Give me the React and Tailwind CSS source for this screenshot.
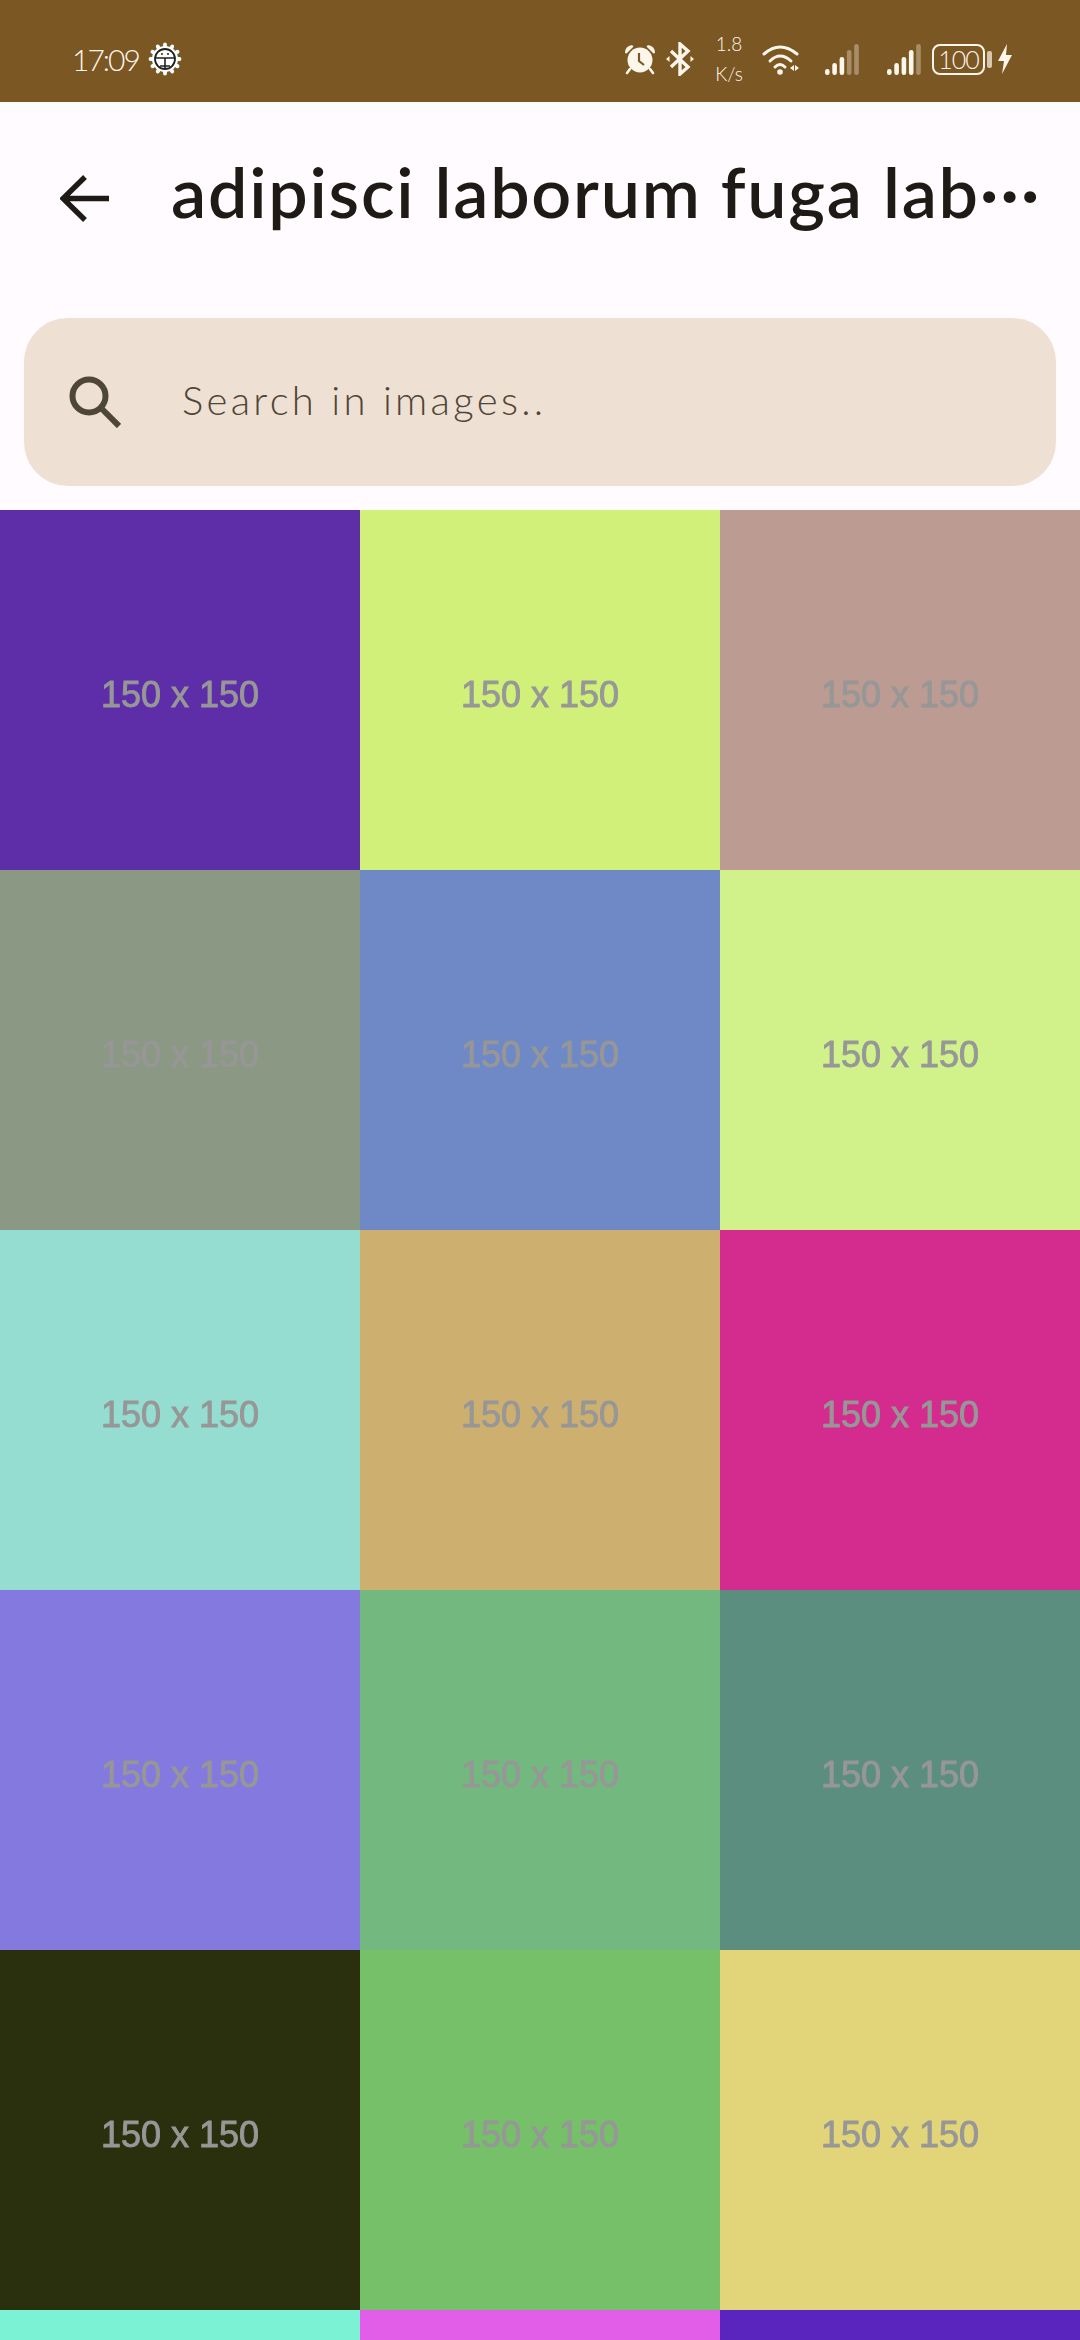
const CELLS = [
  '#5e2ea8', '#d0f07a', '#bb9b92',
  '#8b9884', '#6f88c6', '#d1f28a',
  '#95ddd0', '#cdb06f', '#d32b8e',
  '#8379df', '#73b87e', '#5c8e80',
  '#2a300e', '#75c068', '#e1d479',
  '#7bf2d3', '#e25de8', '#5a25be',
];

const BARS = [6, 12, 18, 25, 31];

function SettingsBadge() {
  return (
    <svg viewBox="0 0 34 34" className="w-[34px] h-[34px] ml-[9px]">
      <g stroke="#fff" strokeWidth="3.8" strokeLinecap="round">
        {[0, 30, 60, 90, 120, 150, 180, 210, 240, 270, 300, 330].map(a => (
          <line key={a} x1="17" y1="2.5" x2="17" y2="6" transform={`rotate(${a} 17 17)`} />
        ))}
      </g>
      <circle cx="17" cy="17" r="13" fill="#fff" />
      <circle cx="17" cy="17" r="10" fill="#fff" stroke="#222" strokeWidth="1.8" />
      <path d="M8 16h18M17 16v10M12 24h10" stroke="#222" strokeWidth="1.6" fill="none" />
      <path d="M13 12h2M19 12h2" stroke="#7b5723" strokeWidth="1.8" />
    </svg>
  );
}

function AlarmIcon() {
  return (
    <svg viewBox="0 0 32 31" className="w-[32px] h-[31px]">
      <circle cx="16" cy="16" r="12.5" fill="#fdf6ea" />
      <path d="M1 9 Q1 2 8 1 L9.5 2.5 L2.5 9.5Z M31 9 Q31 2 24 1 L22.5 2.5 L29.5 9.5Z" fill="#fdf6ea" />
      <path d="M6 25l-3 4M26 25l3 4" stroke="#fdf6ea" strokeWidth="2.6" strokeLinecap="round" />
      <path d="M15 9v8l5 4" stroke="#7b5723" strokeWidth="2.2" fill="none" />
    </svg>
  );
}

function BluetoothIcon() {
  return (
    <svg viewBox="0 0 28 34" className="w-[28px] h-[34px] ml-[10px]">
      <path d="M5 9l17 16-8 7V2l8 7L5 25" stroke="#fdf6ea" strokeWidth="3.4" fill="none" />
      <path d="M0 17l3.5-3v6zM28 17l-3.5-3v6z" fill="#fdf6ea" />
    </svg>
  );
}

function WifiIcon() {
  return (
    <svg viewBox="0 0 38 32" className="w-[38px] h-[32px]">
      <g stroke="#fdf6ea" strokeWidth="3" fill="none" strokeLinecap="round">
        <path d="M2 11Q18-3 35 11" />
        <path d="M8 18Q18 8 29 18" />
        <path d="M13 24Q18 19 23 24" />
      </g>
      <circle cx="18" cy="29" r="2.8" fill="#fdf6ea" />
      <path d="M28 25l4-3v6zM33 22l4 3-4 3z" fill="#fdf6ea" />
    </svg>
  );
}

function SignalIcon({ lit, className }) {
  return (
    <svg viewBox="0 0 34 31" className={`w-[34px] h-[31px] ${className}`}>
      {BARS.map((h, i) => (
        <rect
          key={i}
          x={i * 7.3}
          y={31 - h}
          width="4.6"
          height={h}
          rx="2.3"
          fill="#fdf6ea"
          opacity={i < lit ? 1 : 0.35}
        />
      ))}
    </svg>
  );
}

function BoltIcon() {
  return (
    <svg viewBox="0 0 14 30" className="w-[14px] h-[30px] ml-[6px]">
      <path d="M9 0L0 17h6l-2 13L14 11H8z" fill="#fdf6ea" />
    </svg>
  );
}

function StatusBar() {
  return (
    <div className="h-[102px] bg-[#7b5723] flex items-center justify-between pl-[72px] pr-[68px] text-[#fdf6ea]">
      <div className="flex items-center pt-[16px]">
        <span className="text-[30px] font-light leading-none tracking-[-2px]">17:09</span>
        <SettingsBadge />
      </div>
      <div className="flex items-center pt-[16px]">
        <AlarmIcon />
        <BluetoothIcon />
        <div className="w-[44px] ml-[13px] flex flex-col items-center text-[19px] font-light leading-[30px]">
          <span>1.8</span>
          <span>K/s</span>
        </div>
        <div className="ml-[11px]"><WifiIcon /></div>
        <SignalIcon lit={3} className="ml-[25px]" />
        <SignalIcon lit={4} className="ml-[28px]" />
        <div className="ml-[11px] w-[53px] h-[31px] rounded-[8px] border-[2px] border-[#fdf6ea] flex items-center justify-center text-[25px] font-light leading-none tracking-[-1px]">100</div>
        <div className="ml-[2px] w-[5px] h-[17px] rounded-[2px] bg-[#fdf6ea] opacity-70" />
        <BoltIcon />
      </div>
    </div>
  );
}

function TopBar() {
  return (
    <div className="h-[216px] flex items-center pl-[60px] pr-[40px] pb-[6px]">
      <svg viewBox="0 0 49 47" className="w-[49px] h-[47px] shrink-0 mr-[62px] -mt-[18px]">
        <path d="M25 2L3 23.5 25 45M3 23.5h46" stroke="#1e1b16" strokeWidth="5.4" fill="none" />
      </svg>
      <h1 className="text-[70px] leading-none font-semibold text-[#1e1b16] whitespace-nowrap tracking-[1.75px] -mt-[32px]">adipisci laborum fuga lab···</h1>
    </div>
  );
}

function SearchBox() {
  return (
    <div className="mx-[24px] h-[168px] rounded-[44px] bg-[#eee0d2] flex items-center pl-[45px]">
      <svg viewBox="0 0 52 52" className="w-[52px] h-[52px] shrink-0 mr-[61px]">
        <circle cx="20" cy="20" r="16.5" stroke="#4e4639" strokeWidth="6" fill="none" />
        <path d="M32 32l18 18" stroke="#4e4639" strokeWidth="6" fill="none" />
      </svg>
      <span className="text-[40px] text-[#4e4639] font-light tracking-[3.3px] leading-none -mt-[4px]">Search in images..</span>
    </div>
  );
}

export default function App() {
  return (
    <div className="w-[1080px] h-[2340px] overflow-hidden bg-[#fffbff] font-['Lato',sans-serif]">
      <StatusBar />
      <TopBar />
      <SearchBox />
      <div className="mt-[24px] grid grid-cols-3">
        {CELLS.map((color, i) => (
          <div
            key={i}
            className={i < 15 ? 'h-[360px] flex items-center justify-center pt-[9px]' : 'h-[30px]'}
            style={{ backgroundColor: color }}
          >
            {i < 15 && (
              <span className="text-[36px] text-[#979797] font-['Liberation_Sans',sans-serif] [-webkit-text-stroke:0.9px_#979797] blur-[0.7px] leading-none">150 x 150</span>
            )}
          </div>
        ))}
      </div>
    </div>
  );
}
